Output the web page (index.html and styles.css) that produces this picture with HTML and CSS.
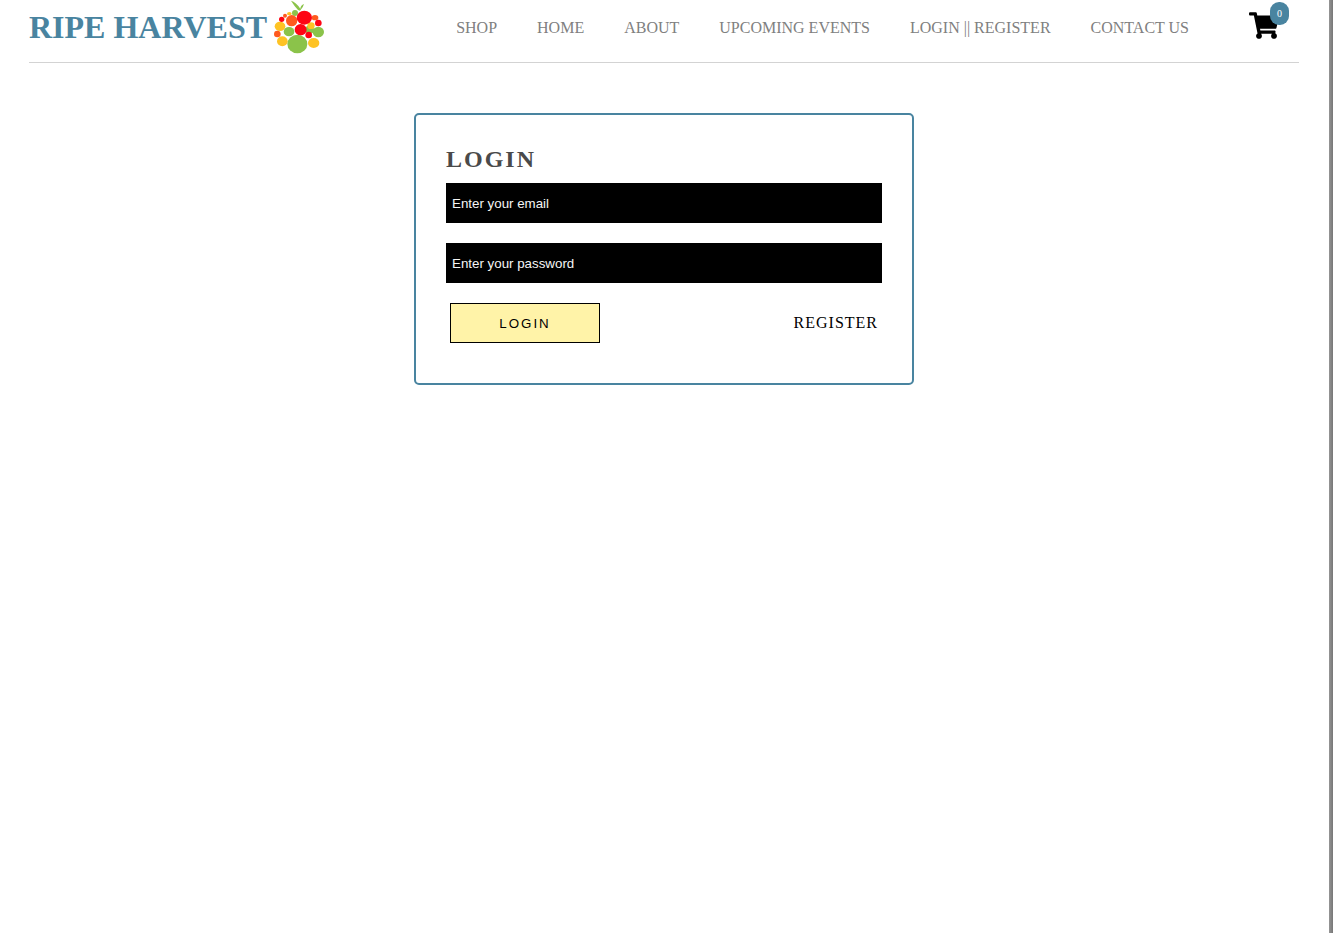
FILE: index.html
```html
<!DOCTYPE html>
<html lang="en">
<head>
<meta charset="utf-8">
<meta name="viewport" content="width=device-width, initial-scale=1">
<title>Ripe Harvest</title>
<link rel="stylesheet" href="styles.css">
</head>
<body class="page">
<div class="content">
  <header class="header">
    <a class="brand" href="#">
      <h1 class="brand-name">RIPE HARVEST</h1>
      <svg class="brand-logo" viewBox="18 0 150 162" aria-hidden="true">
        <g fill="#8bc34a">
          <path d="M69 2 Q84 6 97 26 Q98 16 108 12 Q106 22 96 32 L90 30 Q79 18 69 2Z"/>
          <circle cx="81" cy="39" r="9"/>
          <ellipse cx="63" cy="95" rx="16" ry="14"/>
          <circle cx="125" cy="89" r="13"/>
          <ellipse cx="151" cy="96" rx="17" ry="16"/>
          <ellipse cx="88" cy="132" rx="30" ry="28"/>
        </g>
        <g fill="#fec324">
          <ellipse cx="64" cy="41" rx="7" ry="5"/>
          <ellipse cx="36" cy="79" rx="16" ry="14"/>
          <ellipse cx="129" cy="77" rx="11" ry="10"/>
          <ellipse cx="43" cy="124" rx="16" ry="15"/>
          <ellipse cx="137" cy="129" rx="17" ry="15"/>
        </g>
        <g fill="#fe5a1e">
          <circle cx="51" cy="47" r="6"/>
          <ellipse cx="141" cy="53" rx="10" ry="8"/>
          <circle cx="71" cy="62" r="17"/>
          <circle cx="28" cy="102" r="10"/>
        </g>
        <g fill="#fe0414">
          <circle cx="41" cy="58" r="8"/>
          <ellipse cx="109" cy="53" rx="23" ry="21"/>
          <circle cx="151" cy="69" r="10"/>
          <ellipse cx="98" cy="89" rx="18" ry="17"/>
          <circle cx="122" cy="105" r="10"/>
        </g>
      </svg>
    </a>
    <nav class="nav">
      <a class="nav-link" href="#">SHOP</a>
      <a class="nav-link" href="#">HOME</a>
      <a class="nav-link" href="#">ABOUT</a>
      <a class="nav-link" href="#">UPCOMING EVENTS</a>
      <a class="nav-link" href="#">LOGIN || REGISTER</a>
      <a class="nav-link" href="#">CONTACT US</a>
    </nav>
    <a class="cart" href="#" aria-label="Cart">
      <svg class="cart-icon" viewBox="0 0 576 512" aria-hidden="true"><path d="M528.12 301.319l47.273-208C578.806 78.301 567.391 64 551.99 64H159.208l-9.166-44.81C147.758 8.021 137.93 0 126.529 0H24C10.745 0 0 10.745 0 24v16c0 13.255 10.745 24 24 24h69.883l70.248 343.435C147.325 417.1 136 435.222 136 456c0 30.928 25.072 56 56 56s56-25.072 56-56c0-15.674-6.447-29.835-16.824-40h209.647C430.447 426.165 424 440.326 424 456c0 30.928 25.072 56 56 56s56-25.072 56-56c0-22.172-12.888-41.332-31.579-50.405l5.517-24.276c3.413-15.018-8.002-29.319-23.403-29.319H218.117l-6.545-32h293.145c11.206 0 20.92-7.754 23.403-18.681z"/></svg>
      <span class="cart-badge">0</span>
    </a>
  </header>
  <main class="main">
    <form class="login">
      <h2 class="login-title">LOGIN</h2>
      <div class="login-fields">
        <input class="field" type="email" placeholder="Enter your email" aria-label="Email">
        <input class="field" type="password" placeholder="Enter your password" aria-label="Password">
        <div class="login-actions">
          <button class="login-button" type="button">LOGIN</button>
          <a class="register-link" href="#">REGISTER</a>
        </div>
      </div>
    </form>
  </main>
</div>
<div class="edge"></div>
</body>
</html>
```
FILE: styles.css
```css
* {
  box-sizing: border-box;
}

.page {
  display: flex;
  min-height: 100vh;
  margin: 0;
  background: #fff;
  color: #000;
  font-family: "Liberation Serif", "Times New Roman", serif;
  font-size: 16px;
}

.content {
  flex: 1;
  padding: 0 30px 0 29px;
}

.edge {
  width: 4px;
  background: linear-gradient(to right, #959595, #777);
}

.header {
  display: flex;
  align-items: center;
  padding: 0 20px 8px 0;
  border-bottom: 1px solid #d3d3d3;
}

.brand {
  display: flex;
  align-items: center;
  gap: 7px;
  color: #4984a0;
  text-decoration: none;
}

.brand-name {
  margin: 0;
  font-size: 32px;
  line-height: 36px;
  white-space: nowrap;
}

.brand-logo {
  display: block;
  width: 50px;
  height: 54px;
}

.nav {
  display: flex;
  gap: 40px;
  margin-left: auto;
  padding-top: 2px;
}

.nav-link {
  color: #808080;
  line-height: 18px;
  text-decoration: none;
  white-space: nowrap;
}

.cart {
  position: relative;
  margin-left: 60px;
  padding-bottom: 4px;
  color: #000;
}

.cart-icon {
  display: block;
  width: 30px;
  height: 27px;
  fill: currentColor;
}

.cart-badge {
  position: absolute;
  top: -10px;
  right: -10px;
  padding: 0 7px;
  border-radius: 9px;
  background: #4984a0;
  color: #fff;
  font-size: 10px;
  line-height: 23px;
}

.main {
  padding: 50px 0;
}

.login {
  max-width: 500px;
  margin: 0 auto;
  padding: 30px 30px 40px;
  border: 2px solid #4984a0;
  border-radius: 5px;
}

.login-title {
  margin: 0 0 10px;
  color: #4a4a4a;
  font-size: 24px;
  letter-spacing: 2px;
  line-height: 28px;
}

.login-fields {
  display: flex;
  flex-direction: column;
  gap: 20px;
}

.field {
  width: 100%;
  height: 40px;
  padding: 0 6px;
  border: 0;
  background: #000;
  color: #fff;
  font-family: "Liberation Sans", Arial, sans-serif;
}

.field::placeholder {
  color: #f5f5f5;
  opacity: 1;
}

.login-actions {
  display: flex;
  align-items: center;
  justify-content: space-between;
  padding: 0 4px;
}

.login-button {
  width: 150px;
  height: 40px;
  padding: 0;
  border: 1px solid #000;
  background: #fff3a8;
  color: #000;
  font-family: "Liberation Sans", Arial, sans-serif;
  letter-spacing: 2px;
}

.register-link {
  color: #000;
  letter-spacing: 1px;
  line-height: 18px;
  text-decoration: none;
}
```
